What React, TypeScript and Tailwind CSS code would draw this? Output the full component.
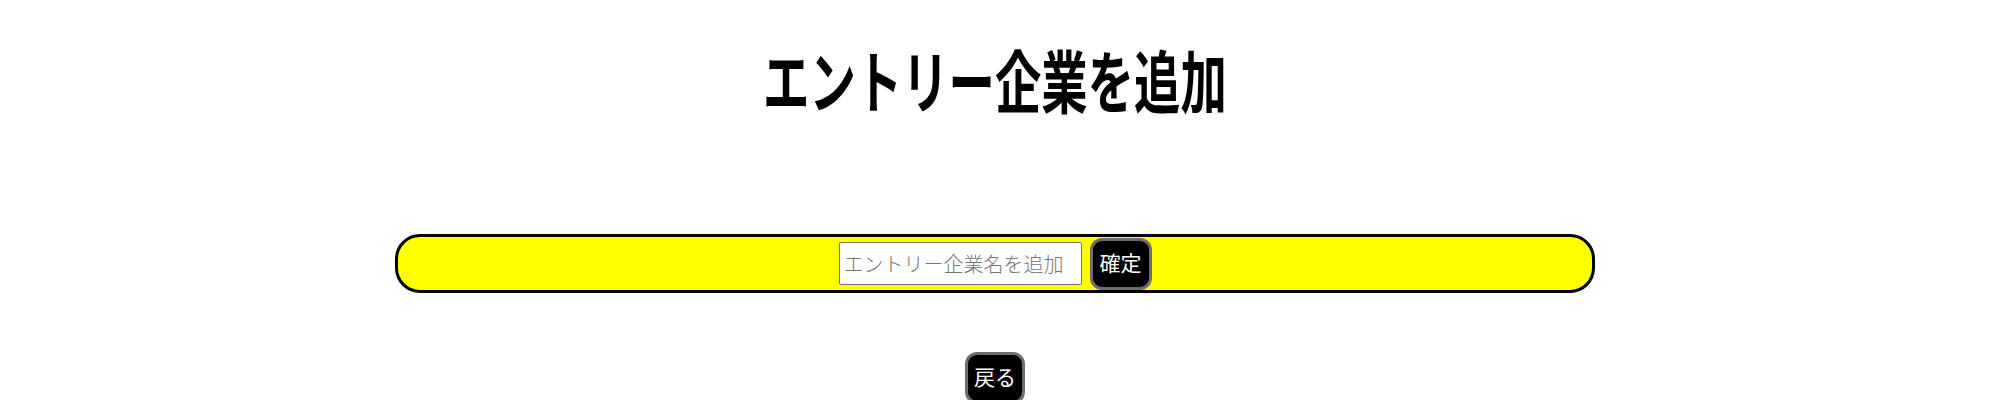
import { useState } from 'react';

export default function App() {
    const [name, setName] = useState('');

    return (
        <div className="min-h-screen bg-white text-black" style={{ fontFamily: '"Noto Sans CJK JP", "Noto Sans", sans-serif' }}>
            {/* Title */}
            <h1 className="mt-[45px] text-center text-[68px] font-bold leading-none scale-x-[0.682]">
                エントリー企業を追加
            </h1>

            {/* Entry form bar */}
            <div className="mx-auto mt-[121px] flex h-[59px] w-[1200px] items-center justify-center gap-2 rounded-[25px] border-[3px] border-black bg-[#ffff00]">
                <input
                    value={name}
                    onChange={(e) => setName(e.target.value)}
                    placeholder="エントリー企業名を追加"
                    className="h-[43px] w-[243px] rounded-[2px] border border-[#767676] bg-white px-1 text-[20px] font-light text-black placeholder:text-[#757575] outline-none"
                />
                <button className="flex h-[52px] w-[62px] items-center justify-center rounded-[12px] border-[3px] border-[#6e6e6e] bg-black pb-[2px] text-[21px] text-white">
                    確定
                </button>
            </div>

            {/* Back */}
            <button className="mx-auto mt-[59px] flex h-[52px] w-[60px] items-center justify-center rounded-[12px] border-[3px] border-[#6e6e6e] bg-black pb-[2px] text-[21px] text-white">
                戻る
            </button>
        </div>
    );
}
